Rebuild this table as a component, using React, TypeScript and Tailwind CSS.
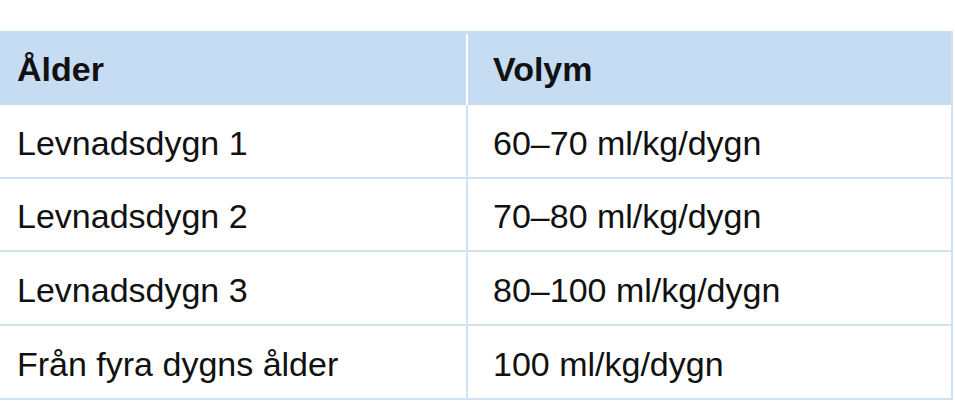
const rows = [
  { age: 'Levnadsdygn 1', vol: '60–70 ml/kg/dygn', h: 'h-[74px]' },
  { age: 'Levnadsdygn 2', vol: '70–80 ml/kg/dygn', h: 'h-[73px]' },
  { age: 'Levnadsdygn 3', vol: '80–100 ml/kg/dygn', h: 'h-[74px]' },
  { age: 'Från fyra dygns ålder', vol: '100 ml/kg/dygn', h: 'h-[74px]' },
]

export default function App() {
  return (
    <div className="h-[416px] w-[955px] bg-white pt-[31px] font-['Liberation_Sans',Arial,sans-serif] text-[34px] text-[#111]">
      <div className="w-[953px] border-r-2 border-[#cfe1f3]">
        <div className="grid h-[74px] grid-cols-[468px_1fr] bg-[#c6dcf2] pt-[3px] font-bold">
          <div className="flex items-center border-r-2 border-white pl-[17px]">Ålder</div>
          <div className="flex items-center pl-[25px]">Volym</div>
        </div>
        {rows.map((r) => (
          <div key={r.age} className={`grid ${r.h} grid-cols-[468px_1fr] border-b-2 border-[#cfe1f3]`}>
            <div className="flex items-center border-r-2 border-[#cfe1f3] pl-[17px] pt-[4px]">{r.age}</div>
            <div className="flex items-center pl-[25px] pt-[4px]">{r.vol}</div>
          </div>
        ))}
      </div>
    </div>
  )
}
